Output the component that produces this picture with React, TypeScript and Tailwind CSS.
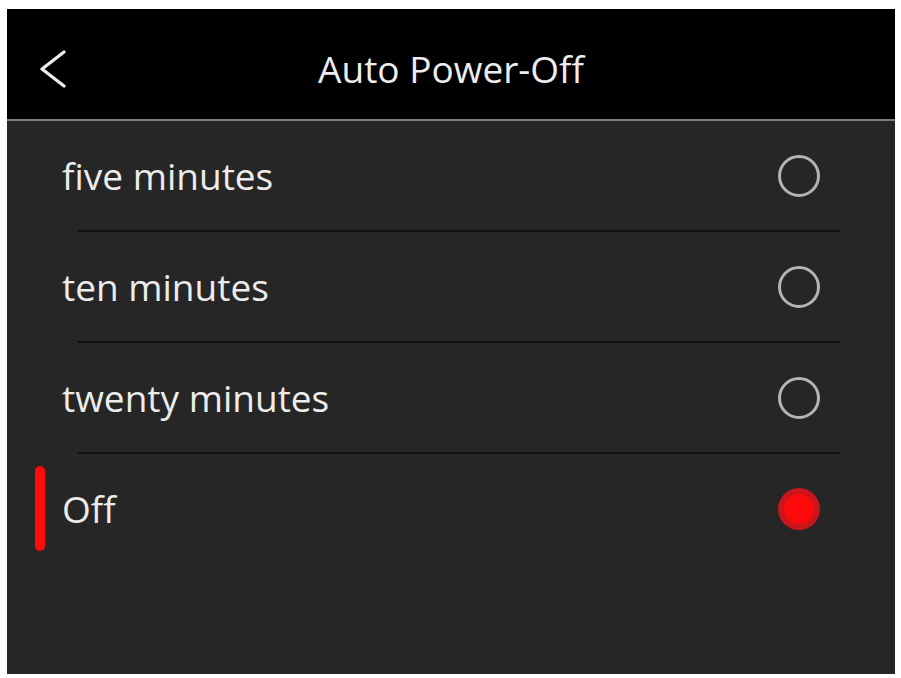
const options = [
  { label: "five minutes", selected: false },
  { label: "ten minutes", selected: false },
  { label: "twenty minutes", selected: false },
  { label: "Off", selected: true },
]

function Radio({ selected }: { selected: boolean }) {
  if (selected) {
    return (
      <div className="flex h-[42px] w-[42px] items-center justify-center rounded-full bg-[#c9161c]">
        <div className="h-[30px] w-[30px] rounded-full bg-[#ff0a0a]" />
      </div>
    )
  }
  return <div className="h-[42px] w-[42px] rounded-full border-[3px] border-[#b4b4b4]" />
}

export default function App() {
  return (
    <div className="h-[678px] w-[901px] bg-white pl-[7px] pt-[9px] font-['Open_Sans',sans-serif]">
      <div className="flex h-[665px] w-[888px] flex-col bg-[#262626]">
        <header className="relative flex h-[112px] shrink-0 items-center justify-center border-b-2 border-[#7c7c7c] bg-black">
          <svg
            className="absolute left-[33px] top-[41px]"
            width="27"
            height="38"
            viewBox="0 0 27 38"
            fill="none"
            stroke="#ededed"
            strokeWidth="3.2"
            strokeLinecap="round"
            strokeLinejoin="round"
          >
            <polyline points="24,2 2,19 24,36" />
          </svg>
          <h1 className="pt-[8px] text-[37px] leading-none text-[#ededed]">Auto Power-Off</h1>
        </header>
        <ul className="flex flex-col">
          {options.map((opt, i) => (
            <li key={opt.label} className="flex flex-col">
              <div className="relative flex h-[109px] items-center justify-between pl-[55px] pr-[75px]">
                {opt.selected && (
                  <span className="absolute left-[28px] top-[12px] h-[85px] w-[10px] rounded-full bg-[#ff0a0a]" />
                )}
                <span className="text-[37px] leading-none text-[#ececec]">{opt.label}</span>
                <Radio selected={opt.selected} />
              </div>
              {i < options.length - 1 && <div className="ml-[71px] mr-[55px] h-[2px] bg-[#111111]" />}
            </li>
          ))}
        </ul>
      </div>
    </div>
  )
}
